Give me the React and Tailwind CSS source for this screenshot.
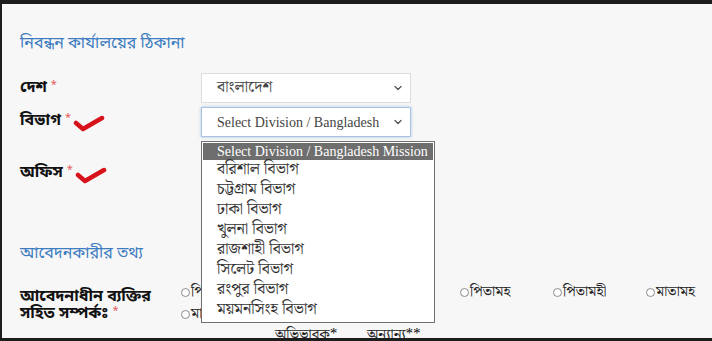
import React from "react";
import { ChevronDown } from "lucide-react";

const bn = { fontFamily: '"Noto Sans Bengali", "Noto Sans", "Liberation Sans", sans-serif' };
const serif = { fontFamily: '"Liberation Serif", "Noto Serif Bengali", "Noto Sans Bengali", serif' };
const bnSerif = { fontFamily: '"Noto Serif Bengali", "Noto Sans Bengali", serif' };

function Check() {
  return (
    <svg width="34" height="22" viewBox="0 0 34 22" className="ml-[2px] mt-[6px]">
      <path d="M3 10 L10 16 L29 5" fill="none" stroke="#d8121b" strokeWidth="4.5" strokeLinecap="round" strokeLinejoin="round" />
    </svg>
  );
}

function Star() {
  return <span className="text-[#e65a5a] text-[11px] ml-[4px] relative -top-[3px] font-normal">*</span>;
}

function Radio({ label }) {
  return (
    <div className="flex items-center h-[22px] text-[15px] text-[#222]">
      <span className="inline-block w-[9px] h-[9px] rounded-full border border-[#8a8a8a] bg-white mr-[1px] shrink-0" />
      <span className="whitespace-nowrap" style={bnSerif}>{label}</span>
    </div>
  );
}

const options = [
  "বরিশাল বিভাগ",
  "চট্টগ্রাম বিভাগ",
  "ঢাকা বিভাগ",
  "খুলনা বিভাগ",
  "রাজশাহী বিভাগ",
  "সিলেট বিভাগ",
  "রংপুর বিভাগ",
  "ময়মনসিংহ বিভাগ",
];

export default function App() {
  return (
    <div className="w-[712px] h-[341px] bg-[#1d1d1d] pt-[4px] pl-[2px] pb-[3px] overflow-hidden">
      <div className="relative w-full h-full bg-[#f7f7f7] pl-[18px] overflow-hidden" style={bn}>
        <div className="mt-[30px] h-[20px] leading-[20px] text-[16px] text-[#3d7cc0]">নিবন্ধন কার্যালয়ের ঠিকানা</div>

        <div className="mt-[19px] h-[30px] flex items-center">
          <div className="w-[181px] shrink-0 flex items-center text-[16px] font-bold text-[#111]">দেশ<Star /></div>
          <div className="w-[210px] shrink-0 h-[30px] bg-white border border-[#dcdcdc] flex items-center justify-between pl-[15px] pr-[6px]">
            <span className="text-[16px] text-[#444]" style={bnSerif}>বাংলাদেশ</span>
            <ChevronDown size={12} strokeWidth={2.6} color="#555" />
          </div>
        </div>

        <div className="mt-[4px] h-[30px] flex items-center">
          <div className="w-[181px] shrink-0 flex items-center text-[16px] font-bold text-[#111] -mt-[2px]">বিভাগ<Star /><Check /></div>
          <div className="relative w-[210px] shrink-0 h-[30px] bg-white border border-[#a9c3e0] shadow-[0_0_3px_rgba(102,153,204,0.5)] flex items-center justify-between pl-[15px] pr-[6px]">
            <span className="text-[14px] text-[#444] whitespace-nowrap overflow-hidden w-[166px]" style={serif}>Select Division / Bangladesh Mission</span>
            <ChevronDown size={12} strokeWidth={2.6} color="#555" className="shrink-0" />
            <div className="absolute left-[-1px] top-[33px] w-[234px] bg-white border border-[#6f6f6f] pt-[1px] pb-[2px] px-[1px] z-10">
              <div className="h-[17px] leading-[17px] bg-[#6e6e6e] text-white text-[14px] pl-[14px] whitespace-nowrap overflow-hidden" style={serif}>Select Division / Bangladesh Mission</div>
              {options.map((o) => (
                <div key={o} className="h-[20px] leading-[20px] text-[16px] text-[#333] pl-[14px] whitespace-nowrap" style={bnSerif}>{o}</div>
              ))}
            </div>
          </div>
        </div>

        <div className="mt-[22px] h-[30px] flex items-center">
          <div className="flex items-center text-[16px] font-bold text-[#111] -mt-[2px]">অফিস<Star /><Check /></div>
        </div>

        <div className="mt-[55px] h-[20px] leading-[20px] text-[16px] text-[#3d7cc0]">আবেদনকারীর তথ্য</div>

        <div className="mt-[17px] flex">
          <div className="w-[161px] shrink-0 pt-[8px] text-[16px] leading-[17px] font-bold text-[#111]">
            <div className="whitespace-nowrap">আবেদনাধীন ব্যক্তির</div>
            <div className="flex items-center whitespace-nowrap">সহিত সম্পর্কঃ<Star /></div>
          </div>
          <div className="shrink-0 grid grid-cols-[93px_93px_93px_93px_93px_93px]">
            <Radio label="পিতা" />
            <Radio label="মাতা" />
            <Radio label="স্বামী" />
            <Radio label="পিতামহ" />
            <Radio label="পিতামহী" />
            <Radio label="মাতামহ" />
            <Radio label="মাতামহী" />
            <Radio label="স্ত্রী" />
            <Radio label="ভাই" />
            <div />
            <div />
            <div />
            <div />
            <div className="h-[20px] flex items-center text-[15px] text-[#222] pl-[1px] whitespace-nowrap" style={bnSerif}>অভিভাবক*</div>
            <div className="h-[20px] flex items-center text-[15px] text-[#222] whitespace-nowrap" style={bnSerif}>অন্যান্য**</div>
          </div>
        </div>
      </div>
    </div>
  );
}
